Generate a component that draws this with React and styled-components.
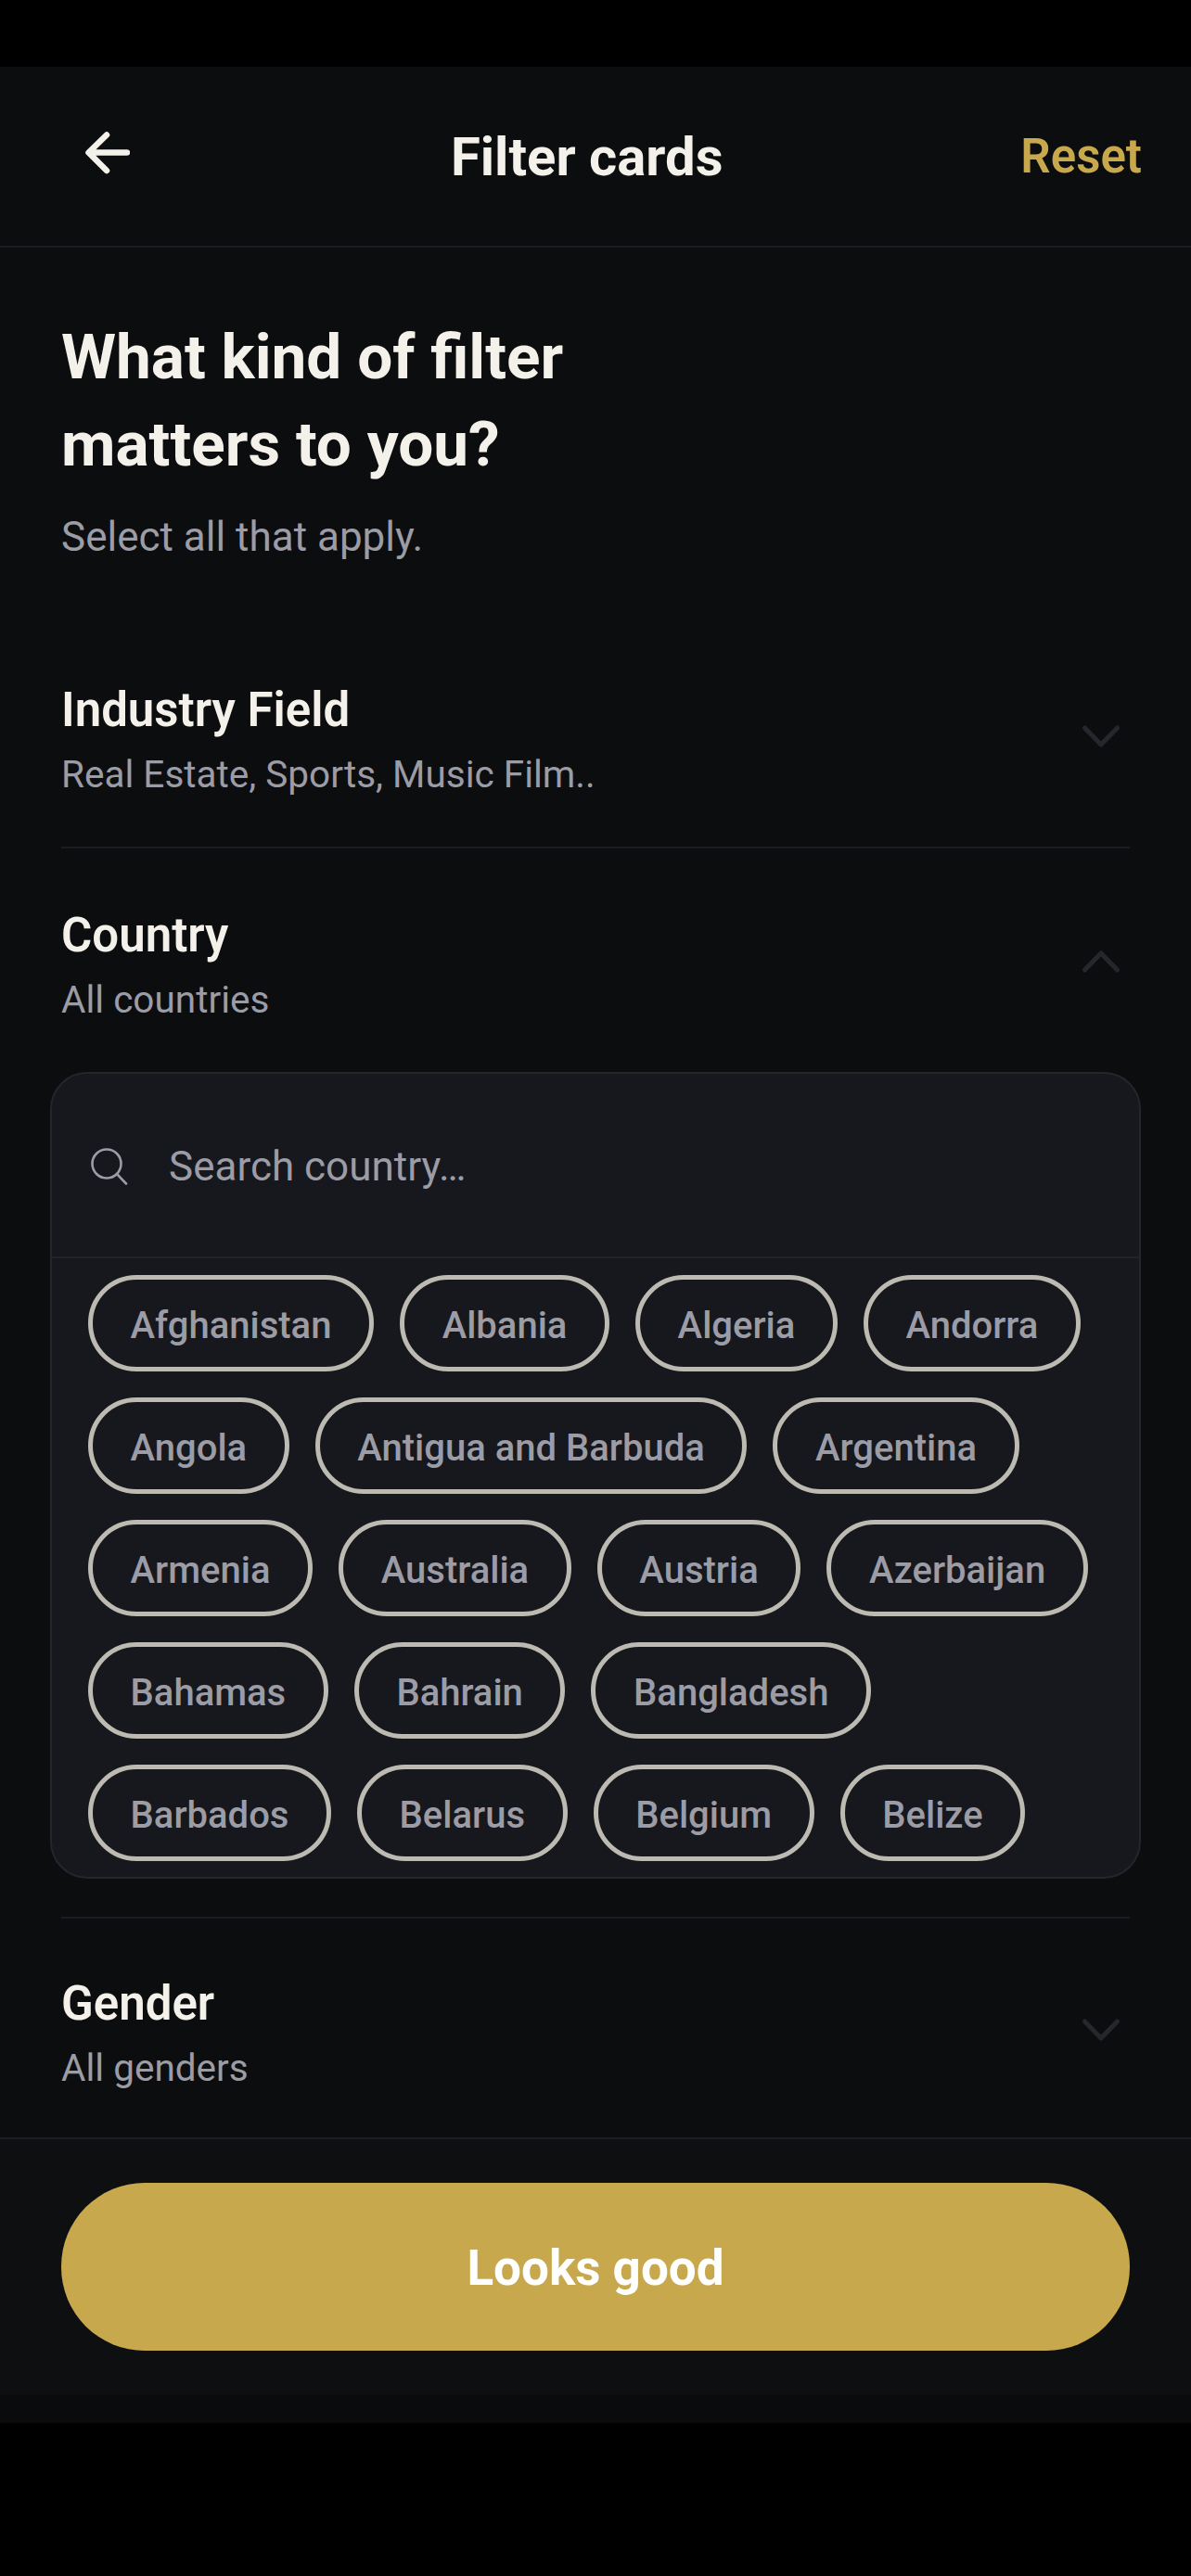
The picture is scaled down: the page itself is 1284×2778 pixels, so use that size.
import styled, { createGlobalStyle } from 'styled-components';

const COUNTRIES = [
    'Afghanistan', 'Albania', 'Algeria', 'Andorra', 'Angola', 'Antigua and Barbuda', 'Argentina',
    'Armenia', 'Australia', 'Austria', 'Azerbaijan', 'Bahamas', 'Bahrain', 'Bangladesh',
    'Barbados', 'Belarus', 'Belgium', 'Belize',
];

function Chevron({ up })
{
    return (
        <ChevronIcon viewBox="0 0 44 26" fill="none">
            <path d={up ? 'M4.5 22 L22 4 L39.5 22' : 'M4.5 4 L22 22 L39.5 4'} stroke="#26272d" strokeWidth="5" strokeLinecap="round" strokeLinejoin="round" />
        </ChevronIcon>
    );
}

function App()
{
    return (
        <Screen>
            <GlobalStyle />
            <Header>
                <BackButton>
                    <svg width="48" height="46" viewBox="0 0 48 46" fill="none">
                        <path d="M45 22.5 H4 M23 3.5 L3.5 22.5 L23 42" stroke="#f4f1ea" strokeWidth="6.5" strokeLinecap="round" strokeLinejoin="round" />
                    </svg>
                </BackButton>
                <HeaderTitle>Filter cards</HeaderTitle>
                <Reset>Reset</Reset>
            </Header>
            <Content>
                <Heading>What kind of filter<br />matters to you?</Heading>
                <Hint>Select all that apply.</Hint>
                <FilterRow $first>
                    <div>
                        <RowTitle>Industry Field</RowTitle>
                        <RowValue>Real Estate, Sports, Music Film..</RowValue>
                    </div>
                    <Chevron />
                </FilterRow>
                <FilterRow $open>
                    <div>
                        <RowTitle>Country</RowTitle>
                        <RowValue>All countries</RowValue>
                    </div>
                    <Chevron up />
                </FilterRow>
                <Panel>
                    <SearchBar>
                        <svg width="40" height="40" viewBox="0 0 40 40" fill="none">
                            <circle cx="17" cy="17" r="15.5" stroke="#9c9ca6" strokeWidth="2.6" />
                            <path d="M28 28 L38 38.5" stroke="#9c9ca6" strokeWidth="2.6" strokeLinecap="round" />
                        </svg>
                        <SearchText>Search country…</SearchText>
                    </SearchBar>
                    <ChipList>
                        {COUNTRIES.map(name => <Chip key={name}>{name}</Chip>)}
                    </ChipList>
                </Panel>
                <FilterRow $last>
                    <div>
                        <RowTitle>Gender</RowTitle>
                        <RowValue>All genders</RowValue>
                    </div>
                    <Chevron />
                </FilterRow>
            </Content>
            <Footer>
                <PrimaryButton>Looks good</PrimaryButton>
                <HomeBar />
            </Footer>
        </Screen>
    );
}

export default App;

const GlobalStyle = createGlobalStyle`
    html, body {
        margin: 0;
        padding: 0;
        background: #000;
    }
    body {
        font-family: Roboto, "Liberation Sans", sans-serif;
    }
`

const Screen = styled.div`
    display: flex;
    flex-direction: column;
    box-sizing: border-box;
    height: 2541px;
    margin-top: 72px;
    margin-bottom: 165px;
    background: #0c0d0f;
`

const Header = styled.header`
    display: flex;
    flex-shrink: 0;
    align-items: center;
    justify-content: space-between;
    box-sizing: border-box;
    height: 195px;
    padding: 0 53px 0 92px;
    border-bottom: 2px solid #1c1d24;
`

const BackButton = styled.div`
    display: flex;
    width: 73px;
    margin-top: -8px;
`

const HeaderTitle = styled.h1`
    margin: 0;
    font-size: 58px;
    font-weight: 700;
    line-height: 64px;
    color: #f4f1ea;
`

const Reset = styled.span`
    font-size: 51px;
    font-weight: 600;
    line-height: 64px;
    color: #c7a84d;
`

const Content = styled.main`
    flex: 1;
    padding: 71px 66px 0;
`

const Heading = styled.h2`
    margin: 0;
    font-size: 67.5px;
    font-weight: 700;
    line-height: 94px;
    color: #f4f1ea;
`

const Hint = styled.p`
    margin: 25px 0 0;
    font-size: 44px;
    line-height: 56px;
    color: #9c9ca6;
`

const FilterRow = styled.div`
    display: flex;
    align-items: center;
    justify-content: space-between;
    padding-top: ${props => props.$first ? '125px' : props.$last ? '58px' : '60px'};
    padding-bottom: ${props => props.$first ? '50px' : props.$open ? '50px' : '46px'};
    padding-right: 11px;
    border-bottom: ${props => props.$first ? '2px solid #1c1d24' : 'none'};
    border-top: ${props => props.$last ? '2px solid #1c1d24' : 'none'};
`

const RowTitle = styled.div`
    font-size: 51px;
    font-weight: 600;
    line-height: 68px;
    color: #f4f1ea;
`

const RowValue = styled.div`
    margin-top: 7px;
    font-size: 40.5px;
    line-height: 56px;
    color: #9c9ca6;
`

const ChevronIcon = styled.svg`
    width: 44px;
    height: 26px;
    margin-top: -8px;
    margin-right: -2px;
`

const Panel = styled.section`
    box-sizing: border-box;
    margin: 0 -12px 41px;
    height: 870px;
    background: #16181d;
    border: 2px solid #24262d;
    border-radius: 40px;
`

const SearchBar = styled.div`
    display: flex;
    align-items: center;
    gap: 44px;
    box-sizing: border-box;
    height: 199px;
    padding: 2px 42px 0;
    border-bottom: 2px solid #212329;
`

const SearchText = styled.span`
    font-size: 44px;
    line-height: 56px;
    color: #9c9ca6;
`

const ChipList = styled.div`
    display: flex;
    flex-wrap: wrap;
    gap: 28px;
    padding: 18px 39px;
`

const Chip = styled.div`
    box-sizing: border-box;
    height: 104px;
    padding: 0 40.6px;
    border: 5px solid #bdbab2;
    border-radius: 52px;
    font-size: 40px;
    font-weight: 500;
    line-height: 100px;
    color: #9c9ca6;
`

const Footer = styled.footer`
    flex-shrink: 0;
    box-sizing: border-box;
    height: 308px;
    padding-top: 47px;
    background: #0e0f11;
    border-top: 2px solid #1c1d24;
`

const PrimaryButton = styled.div`
    height: 181px;
    margin: 0 66px 47px;
    border-radius: 90px;
    background: #c7a84d;
    font-size: 53px;
    font-weight: 700;
    line-height: 185px;
    text-align: center;
    color: #fff;
`

const HomeBar = styled.div`
    height: 31px;
    background: #0a0b0d;
`
